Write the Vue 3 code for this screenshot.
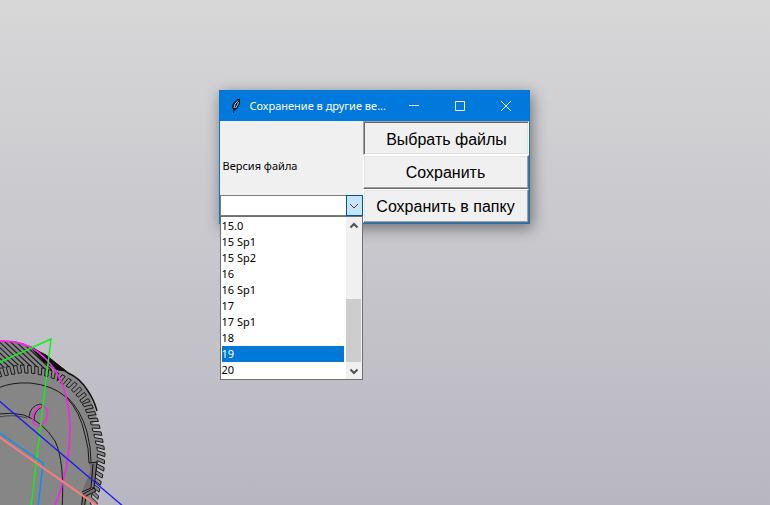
<script setup>
import { ref } from 'vue'

const versions = ['15.0', '15 Sp1', '15 Sp2', '16', '16 Sp1', '17', '17 Sp1', '18', '19', '20']
const highlighted = ref('19')
const version = ref('')
const open = ref(true)

const actions = [
  { label: 'Выбрать файлы', sunken: true },
  { label: 'Сохранить', sunken: false },
  { label: 'Сохранить в папку', sunken: false },
]

function choose(value) {
  version.value = value
  open.value = false
}

// Front rim of the gear; teeth are cut inwards from this line.
const rim = [
  [-8, 370], [6, 367], [20, 365], [35, 366], [50, 370], [63, 375], [76, 383], [85, 393],
  [92, 405], [98, 420], [102, 436], [105, 453], [104, 470], [100, 487], [96, 510],
]

function sampleRim(step) {
  const out = []
  let carry = 0
  for (let i = 0; i < rim.length - 1; i++) {
    const [ax, ay] = rim[i]
    const [bx, by] = rim[i + 1]
    const length = Math.hypot(bx - ax, by - ay)
    let d = carry
    while (d < length) {
      out.push([ax + ((bx - ax) * d) / length, ay + ((by - ay) * d) / length])
      d += step
    }
    carry = d - length
  }
  return out
}

// Slots lean with the helix: to the left on the upper edge, upwards on the right.
function inward([x, y], depth) {
  const dx = -2 - x * 0.8
  const dy = (x > 90 ? 425 : 446) - y
  const l = Math.hypot(dx, dy)
  return [x + (dx / l) * depth + (x < 60 ? 3 : 0), y + (dy / l) * depth]
}

const point = (p) => p.map((n) => n.toFixed(1)).join(' ')
const samples = sampleRim(3.6)
const teeth = samples
  .map((p, i) => {
    const inner = inward(p, 8)
    return i % 2 ? `L${point(p)} L${point(inner)}` : `L${point(inner)} L${point(p)}`
  })
  .join(' ')
const face = `M-8 510 ${teeth} L96 510 Z`

const ridges = Array.from({ length: 18 }, (_, i) => {
  const x = -44 + i * 5.6
  return `M${x.toFixed(1)} 338 l34 32`
}).join(' ')
</script>

<template>
  <main class="scene">
    <svg class="model" viewBox="0 330 130 175" aria-hidden="true">
      <defs>
        <clipPath id="top-side">
          <path d="M-5 341 L14 341 Q30 344 42 353 L66 371 L80 385 L50 371 L35 366 L20 365 L-5 369 Z" />
        </clipPath>
      </defs>
      <path class="side" d="M-5 341 L14 341 Q30 344 42 353 L66 371 Q80 377 89 393 L97 415 L90 430 L40 380 L-5 378 Z" />
      <path class="ridges" clip-path="url(#top-side)" :d="ridges" />
      <path class="shade" d="M30 347 L46 355 L66 371 L58 370 L44 362 Z" />
      <path class="face" :d="face" />
      <path class="outline" d="M48 360 Q62 368 68 373 Q80 378 88 391 Q94 400 97 411" />
      <path class="inner" d="M-2 388 Q12 382 30 383 Q52 385 66 397 Q80 411 85 435 Q89 448 89 463" />
      <path class="inner" d="M67 397 Q81 410 87 432 Q91 447 91 462" />
      <path class="inner" d="M-2 414 Q12 412 24 415 Q43 422 55 441 Q65 462 62 510" />
      <path class="inner thin" d="M-2 417 Q14 414 27 418" />
      <path class="step" d="M89 463 L97 462 L94 488 L83 494 L81 510 L84 510 L86 496 L96 491 L94 488 M93 464 L91 488 L82 492" />
      <path class="hole" d="M29 417 Q30 406 40 404 L44 406 M34 420 Q34 411 42 407" />
      <ellipse class="magenta" cx="40" cy="416" rx="7" ry="10" transform="rotate(24 40 416)" />
      <path class="magenta" d="M-2 341 Q22 340 38 352 Q56 366 63 386 Q70 406 70 430 Q69 475 53 510" />
      <path class="green" d="M-2 363 L51 339 L42 414 L31 507" />
      <path class="sky" d="M-2 432 L43 463 L38 507" />
      <path class="blue" d="M-2 400 L124 507" />
      <path class="coral" d="M-2 436 L99 507" />
    </svg>

    <section class="window" aria-label="Сохранение в другие версии">
      <header class="titlebar">
        <svg class="feather" viewBox="0 0 12 16" aria-hidden="true">
          <path class="quill" d="M3.500 15 L4 12 Q1 9 3.500 5.500 Q6 1.500 9.500 1 Q10.500 5 7.500 9.500 Q6 12 4 12" />
          <path class="vane" d="M4 10 Q4 6 8 2.500 M5.500 10 Q8 7 8.500 4" />
        </svg>
        <h1 class="title">Сохранение в другие ве...</h1>
        <div class="controls">
          <button type="button" aria-label="Свернуть">
            <svg viewBox="0 0 12 12"><path d="M1 5.500 H11" /></svg>
          </button>
          <button type="button" aria-label="Развернуть">
            <svg viewBox="0 0 12 12"><path d="M1.500 1.500 H10.500 V10.500 H1.500 Z" /></svg>
          </button>
          <button type="button" aria-label="Закрыть">
            <svg viewBox="0 0 12 12"><path d="M1 1 L11 11 M11 1 L1 11" /></svg>
          </button>
        </div>
      </header>

      <div class="client">
        <div class="form">
          <label class="caption" for="version">Версия файла</label>
          <div class="combo">
            <input id="version" v-model="version" class="field" type="text" autocomplete="off" />
            <button class="arrow" type="button" aria-label="Список версий" @click="open = !open">
              <svg viewBox="0 0 10 6"><path d="M1 1 L5 5 L9 1" /></svg>
            </button>
            <div v-if="open" class="popup">
              <ul class="list" role="listbox" aria-label="Версия файла">
                <li
                  v-for="item in versions"
                  :key="item"
                  role="option"
                  class="option"
                  :class="{ active: item === highlighted }"
                  :aria-selected="item === highlighted"
                  @mouseenter="highlighted = item"
                  @click="choose(item)"
                >{{ item }}</li>
              </ul>
              <div class="scrollbar">
                <button type="button" aria-label="Вверх">
                  <svg viewBox="0 0 10 8"><path d="M1.500 5.500 L5 2 L8.500 5.500" /></svg>
                </button>
                <div class="track"><div class="thumb"></div></div>
                <button type="button" aria-label="Вниз">
                  <svg viewBox="0 0 10 8"><path d="M1.500 2.500 L5 6 L8.500 2.500" /></svg>
                </button>
              </div>
            </div>
          </div>
        </div>
        <div class="actions">
          <button
            v-for="action in actions"
            :key="action.label"
            type="button"
            class="action"
            :class="{ sunken: action.sunken }"
          >{{ action.label }}</button>
        </div>
      </div>
    </section>
  </main>
</template>

<style>
body {
  margin: 0;
}
</style>

<style scoped>
.scene {
  display: flex;
  flex-direction: column;
  align-items: center;
  position: relative;
  box-sizing: border-box;
  min-height: 100vh;
  padding: 90px 22px 0 0;
  overflow: hidden;
  background: linear-gradient(#d7d7d8, #b8b7c1);
  font-family: "Noto Sans", "Open Sans", sans-serif;
  font-size: 11px;
  color: #000;
}

.model {
  position: absolute;
  left: 0;
  bottom: 0;
  width: 130px;
  height: 175px;
}
.model path,
.model ellipse {
  fill: none;
  stroke: #111;
  stroke-width: 1;
}
.model .side { fill: #868686; stroke: none; }
.model .ridges { stroke: #222; stroke-width: 1.2; }
.model .shade { fill: #0a0a0a; }
.model .face { fill: #868686; stroke: #1a1a1a; stroke-linejoin: round; }
.model .outline { stroke-width: 1.5; }
.model .inner { stroke: #1a1a1a; }
.model .thin { stroke: #444; }
.model .step { fill: #6f6f6f; }
.model .hole { stroke: #222; }
.model .magenta { stroke: #fa22e6; stroke-width: 1.6; }
.model .green { stroke: #0df01a; stroke-width: 1.5; }
.model .sky { stroke: #0a90f5; stroke-width: 1.5; }
.model .blue { stroke: #1a1af0; stroke-width: 1.3; }
.model .coral { stroke: #fb7d78; stroke-width: 2; }

.window {
  box-sizing: border-box;
  width: 311px;
  border: 1px solid #0078d7;
  background: #f0f0f0;
  box-shadow: 2px 4px 14px rgba(0, 0, 0, 0.45);
}

.titlebar {
  display: flex;
  align-items: center;
  height: 30px;
  padding-left: 10px;
  background: #0078dc;
  color: #fff;
}
.feather {
  flex: none;
  width: 12px;
  height: 16px;
  margin-right: 8px;
}
.quill { fill: #0b1a26; stroke: #06121c; stroke-width: 1; }
.vane { fill: none; stroke: #a8d4f0; stroke-width: 1; }
.title {
  flex: 1;
  min-width: 0;
  margin: 0;
  font-size: 11px;
  font-weight: 400;
  line-height: 16px;
  white-space: nowrap;
}
.controls {
  display: flex;
  flex: none;
  height: 100%;
}
.controls button {
  display: grid;
  place-items: center;
  width: 46px;
  padding: 0;
  border: 0;
  background: none;
}
.controls svg {
  width: 12px;
  height: 12px;
  fill: none;
  stroke: #fff;
  stroke-width: 1;
}

.client {
  display: grid;
  grid-template-columns: 143px 1fr;
}
.form {
  display: flex;
  flex-direction: column;
  justify-content: flex-end;
  gap: 21px;
  padding-bottom: 7px;
}
.caption {
  padding-left: 3px;
  line-height: 16px;
}
.combo {
  position: relative;
  display: flex;
  height: 21px;
}
.field {
  flex: 1;
  min-width: 0;
  box-sizing: border-box;
  padding: 0 3px;
  border: 1px solid #7a7a7a;
  border-right: 0;
  background: #fff;
  font: inherit;
  outline: 0;
}
.arrow {
  display: grid;
  place-items: center;
  box-sizing: border-box;
  width: 17px;
  padding: 0;
  border: 1px solid #005499;
  background: #c6e4f7;
}
.arrow svg {
  width: 10px;
  height: 6px;
  fill: none;
  stroke: #444;
  stroke-width: 1;
}

.popup {
  position: absolute;
  top: 100%;
  left: 0;
  right: 0;
  z-index: 1;
  display: flex;
  border: 1px solid #707070;
  background: #fff;
}
.list {
  flex: 1;
  margin: 0;
  padding: 1px;
  list-style: none;
}
.option {
  height: 16px;
  line-height: 16px;
}
.active {
  background: #0078d7;
  color: #fff;
}
.scrollbar {
  display: flex;
  flex-direction: column;
  width: 16px;
  margin-left: 1px;
  background: #f0f0f0;
}
.scrollbar button {
  display: grid;
  place-items: center;
  height: 17px;
  padding: 0;
  border: 0;
  background: none;
}
.scrollbar svg {
  width: 10px;
  height: 8px;
  fill: none;
  stroke: #505050;
  stroke-width: 2;
}
.track {
  flex: 1;
  display: flex;
  align-items: flex-end;
}
.thumb {
  width: 15px;
  height: 49%;
  background: #cdcdcd;
}

.actions {
  display: grid;
  grid-auto-rows: 34px;
}
.action {
  padding: 2px 0 0;
  border: 1px solid;
  border-color: #fff #696969 #696969 #fff;
  box-shadow: inset -1px -1px #a0a0a0, inset 1px 1px #e3e3e3;
  background: #f0f0f0;
  font-family: "Liberation Sans", Arial, sans-serif;
  font-size: 16px;
  color: #000;
}
.sunken {
  padding: 4px 0 0 2px;
  border-color: #a0a0a0 #fff #fff #a0a0a0;
  box-shadow: inset 1px 1px #696969, inset -1px -1px #e3e3e3;
}
</style>
